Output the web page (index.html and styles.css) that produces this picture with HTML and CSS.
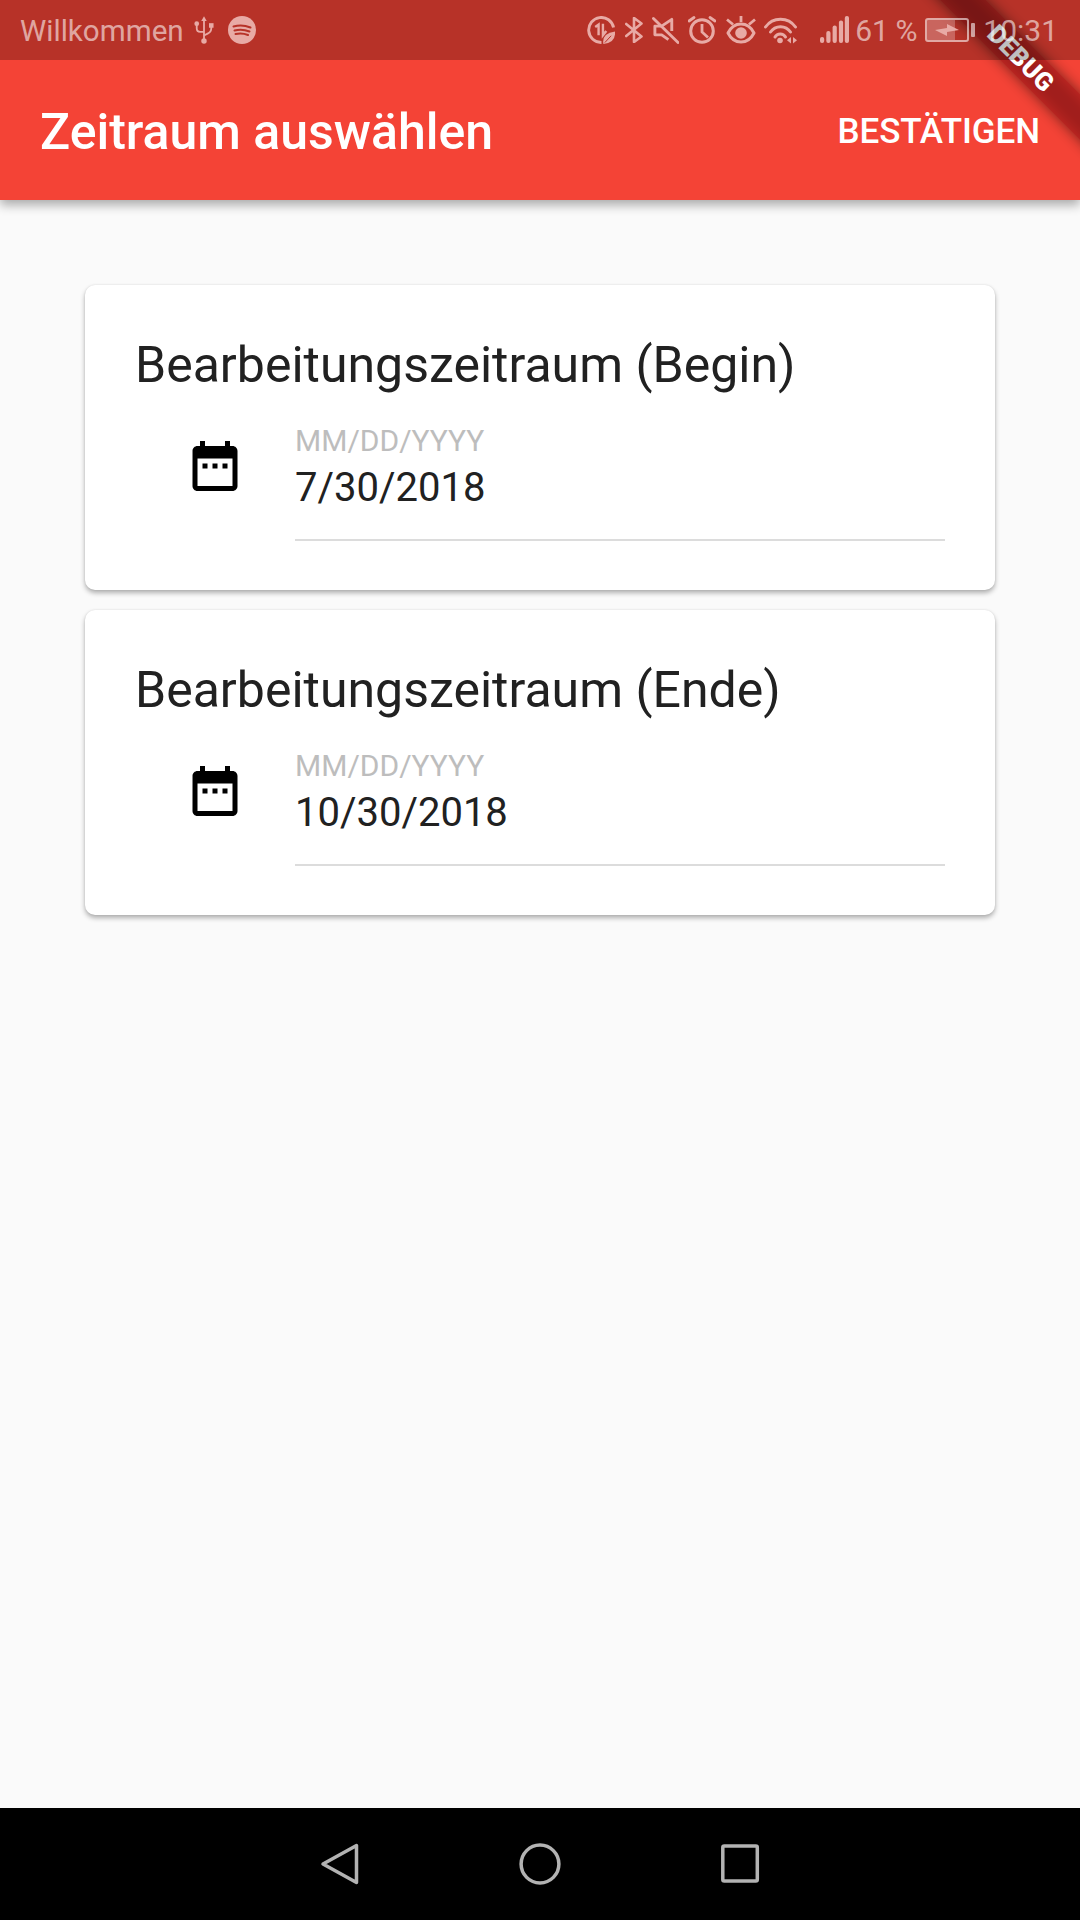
FILE: index.html
```html
<!DOCTYPE html>
<html lang="de">
<head>
<meta charset="utf-8">
<title>Zeitraum auswählen</title>
<link rel="stylesheet" href="styles.css">
</head>
<body>
<div class="screen">
  <header class="top">
    <div class="status">
      <div class="status-left">
        <span class="status-text welcome">Willkommen</span>
        <svg class="ic-usb" viewBox="0 0 22 30"><g fill="none" stroke="currentColor" stroke-width="2"><path d="M11 3V27"/><path d="M3 9v4q0 4 4 4h4"/><path d="M19 11v2q0 4-4 6l-4 2"/></g><path d="M11 0l3 5H8z" fill="currentColor"/><circle cx="11" cy="27" r="3" fill="currentColor"/><circle cx="3" cy="8" r="2.6" fill="currentColor"/><rect x="16.5" y="7.5" width="5" height="5" fill="currentColor"/></svg>
        <svg class="ic-spotify" viewBox="0 0 28 28"><circle cx="14" cy="14" r="14" fill="currentColor"/><g fill="none" stroke="#b73228" stroke-width="2" stroke-linecap="round"><path d="M5.5 10.5q8.500-2.500 17 1"/><path d="M6.500 14.500q7.500-2 15 1"/><path d="M7.500 18q6.500-1.500 12.500 1"/></g></svg>
      </div>
      <div class="status-right">
        <svg class="ic-saver" viewBox="0 0 29 29"><path d="M15 27.500A13 13 0 1 1 27.500 12" fill="none" stroke="currentColor" stroke-width="3"/><path d="M8.500 11.500L12 9V20M16.500 8V20L20 15.500" fill="none" stroke="currentColor" stroke-width="2.500"/><path d="M17 29Q15 18 29 16Q30 28 17 29z" fill="currentColor"/><path d="M18.500 27.500L25 20.500" fill="none" stroke="#b73228" stroke-width="1"/></svg>
        <svg class="ic-bt" viewBox="0 0 18 26"><path d="M1.200 7L16.500 19.500 9 25V1L16.500 6.500 1.200 19" fill="none" stroke="currentColor" stroke-width="2.600" stroke-linecap="round" stroke-linejoin="round"/></svg>
        <svg class="ic-mute" viewBox="0 0 28 28"><path d="M10 10H3V19H10L17 24M10 10L20.500 3V15" fill="none" stroke="currentColor" stroke-width="3" stroke-linejoin="round"/><path d="M1.500 2L27 27" fill="none" stroke="currentColor" stroke-width="3" stroke-linecap="round"/></svg>
        <svg class="ic-alarm" viewBox="0 0 28 28"><circle cx="14" cy="15" r="11.300" fill="none" stroke="currentColor" stroke-width="3"/><path d="M14 8V16L20 21.500" fill="none" stroke="currentColor" stroke-width="2.800"/><path d="M1 5L6 1.500M27 5L22 1.500" fill="none" stroke="currentColor" stroke-width="2.800" stroke-linecap="round"/></svg>
        <svg class="ic-eye" viewBox="0 0 30 28"><path d="M2 17C8 5 22 5 28 17C22 29 8 29 2 17z" fill="none" stroke="currentColor" stroke-width="3" stroke-linejoin="round"/><circle cx="15" cy="17" r="5.800" fill="currentColor"/><path d="M15 0V6M1 3.500L7 8.500M29 3.500L23 8.500" fill="none" stroke="currentColor" stroke-width="2.800"/></svg>
        <svg class="ic-wifi" viewBox="0 0 33 28"><g fill="none" stroke="currentColor" stroke-width="3" stroke-linecap="round"><path d="M1.500 11A18.400 18.400 0 0 1 31.500 11"/><path d="M6.500 16A12 12 0 0 1 26.500 16"/><path d="M11 21A6 6 0 0 1 21.500 21"/></g><circle cx="16" cy="24.500" r="2.800" fill="currentColor"/><path d="M27 21v6.500l-4-3.200zM29 21v6.500l4-3.200z" fill="currentColor"/></svg>
        <svg class="ic-signal" viewBox="0 0 29 28"><g fill="currentColor"><rect x="0" y="21" width="4.200" height="6" rx="2"/><rect x="6.300" y="15" width="4.200" height="12" rx="2"/><rect x="12.600" y="9.500" width="4.200" height="17.500" rx="2"/><rect x="18.900" y="4.500" width="4.200" height="22.500" rx="2"/><rect x="24.800" y="0" width="4.200" height="27" rx="2"/></g></svg>
        <span class="status-text pct">61 %</span>
        <div class="battery"><div class="battery-body"><div class="battery-fill"></div><svg class="ic-bolt" viewBox="0 0 24 12"><path d="M0 6l12-2 0-4 12 6-12 2 0 4z" fill="currentColor"/></svg></div><div class="battery-cap"></div></div>
        <span class="status-text time">10:31</span>
      </div>
    </div>
    <div class="appbar">
      <h1 class="appbar-title">Zeitraum auswählen</h1>
      <span class="appbar-action">BESTÄTIGEN</span>
    </div>
  </header>

  <main class="content">
    <section class="card">
      <h2 class="card-title">Bearbeitungszeitraum (Begin)</h2>
      <div class="field-row">
        <svg class="ic-date" viewBox="0 0 24 24"><path d="M9 11H7v2h2v-2zm4 0h-2v2h2v-2zm4 0h-2v2h2v-2zm2-7h-1V2h-2v2H8V2H6v2H5c-1.110 0-1.990.9-1.990 2L3 20c0 1.100.89 2 2 2h14c1.100 0 2-.9 2-2V6c0-1.100-.9-2-2-2zm0 16H5V9h14v11z"/></svg>
        <div class="field">
          <div class="field-hint">MM/DD/YYYY</div>
          <div class="field-value">7/30/2018</div>
        </div>
      </div>
    </section>
    <section class="card">
      <h2 class="card-title">Bearbeitungszeitraum (Ende)</h2>
      <div class="field-row">
        <svg class="ic-date" viewBox="0 0 24 24"><path d="M9 11H7v2h2v-2zm4 0h-2v2h2v-2zm4 0h-2v2h2v-2zm2-7h-1V2h-2v2H8V2H6v2H5c-1.110 0-1.990.9-1.990 2L3 20c0 1.100.89 2 2 2h14c1.100 0 2-.9 2-2V6c0-1.100-.9-2-2-2zm0 16H5V9h14v11z"/></svg>
        <div class="field">
          <div class="field-hint">MM/DD/YYYY</div>
          <div class="field-value">10/30/2018</div>
        </div>
      </div>
    </section>
  </main>

  <nav class="navbar">
    <svg class="nav-icon" viewBox="0 0 44 44"><path d="M38.500 3.500V40.500L5 22z" fill="none" stroke="#b3b3b3" stroke-width="3.500" stroke-linejoin="round"/></svg>
    <svg class="nav-icon" viewBox="0 0 44 44"><circle cx="22" cy="22" r="18.900" fill="none" stroke="#b3b3b3" stroke-width="3.500"/></svg>
    <svg class="nav-icon" viewBox="0 0 44 44"><rect x="4.800" y="4" width="34.500" height="35" rx="1.500" fill="none" stroke="#b3b3b3" stroke-width="3.500"/></svg>
  </nav>

  <div class="banner" aria-hidden="true">
    <div class="banner-shadow"></div>
    <div class="banner-band">DEBUG</div>
  </div>
</div>
</body>
</html>
```

FILE: styles.css
```css
* { box-sizing: border-box; }
html, body { margin: 0; padding: 0; }
body { font-family: Roboto, "Liberation Sans", sans-serif; background: #fafafa; }

.screen {
  position: relative;
  width: 1080px;
  height: 1920px;
  overflow: hidden;
  display: flex;
  flex-direction: column;
}

.top {
  position: relative;
  background: #f44336;
  box-shadow: 0 5px 10px rgba(0, 0, 0, 0.32);
}

.status {
  position: relative;
  z-index: 3;
  height: 60px;
  background: rgba(0, 0, 0, 0.25);
  color: rgba(255, 255, 255, 0.58);
  padding: 0 22px 0 20px;
  display: flex;
  justify-content: space-between;
  align-items: center;
}
.status-left, .status-right { display: flex; align-items: center; }
.status-text { font-size: 30px; line-height: 36px; padding-top: 2px; }
.welcome { font-size: 29.6px; }
.status svg { display: block; flex: none; color: #e8aaa5; }

.ic-usb { width: 20px; height: 28px; margin-left: 10px; }
.ic-spotify { width: 28px; height: 28px; margin-left: 14px; }
.ic-saver { width: 28px; height: 28px; }
.ic-bt { width: 18px; height: 26px; margin-left: 10px; }
.ic-mute { width: 27px; height: 28px; margin-left: 9px; }
.ic-alarm { width: 28px; height: 28px; margin-left: 9px; }
.ic-eye { width: 30px; height: 28px; margin-left: 10px; }
.ic-wifi { width: 33px; height: 28px; margin-left: 8px; }
.ic-signal { width: 29px; height: 28px; margin-left: 23px; }
.pct { margin-left: 6px; letter-spacing: -0.3px; }

.battery { display: flex; align-items: center; margin-left: 8px; }
.battery-body {
  position: relative;
  width: 44px;
  height: 24px;
  border: 2px solid currentColor;
  border-radius: 3px;
}
.battery-fill {
  width: 28px;
  height: 100%;
  background: rgba(255, 255, 255, 0.25);
}
.status .ic-bolt {
  position: absolute;
  left: 8px;
  top: 4px;
  width: 24px;
  height: 12px;
}
.battery-cap { width: 4px; height: 14px; margin-left: 2px; background: currentColor; border-radius: 1px; }
.time { margin-left: 8px; }

.appbar {
  height: 140px;
  color: #fff;
  padding: 3px 40px 0;
  display: flex;
  justify-content: space-between;
  align-items: center;
}
.appbar-title { margin: 0; font-size: 50px; font-weight: 500; line-height: 60px; }
.appbar-action { font-size: 35px; font-weight: 500; line-height: 42px; letter-spacing: -0.1px; }

.content {
  flex: 1;
  padding: 85px 85px 0;
  display: flex;
  flex-direction: column;
  gap: 20px;
}

.card {
  background: #fff;
  border-radius: 10px;
  padding: 50px 50px 49px;
  box-shadow: 0 3px 5px rgba(0, 0, 0, 0.3), 0 0 2px rgba(0, 0, 0, 0.1);
}
.card-title {
  margin: 0;
  font-size: 50px;
  font-weight: 400;
  line-height: 60px;
  color: #212121;
}
.field-row {
  display: flex;
  gap: 50px;
  padding: 28px 0 0 50px;
}
.ic-date { display: block; flex: none; width: 60px; height: 60px; margin-top: 13px; fill: #000; }
.field { flex: 1; border-bottom: 2px solid #dcdcdc; padding-bottom: 27px; }
.field-hint { font-size: 30px; line-height: 36px; color: #bdbdbd; }
.field-value { font-size: 40px; line-height: 48px; margin-top: 5px; color: #212121; }

.navbar {
  height: 112px;
  background: #000;
  display: flex;
  justify-content: center;
  align-items: center;
  gap: 156px;
}
.nav-icon { display: block; width: 44px; height: 44px; }

.banner {
  position: absolute;
  z-index: 2;
  left: 871px;
  top: 42px;
  width: 300px;
  height: 32px;
  transform: rotate(45deg);
}
.banner-shadow {
  position: absolute;
  inset: 0;
  background: rgba(0, 0, 0, 0.5);
  filter: blur(7px);
}
.banner-band {
  position: relative;
  height: 32px;
  background: rgba(183, 28, 28, 0.63);
  color: #fff;
  font-size: 25.5px;
  font-weight: 900;
  line-height: 32px;
  text-align: center;
}
```
